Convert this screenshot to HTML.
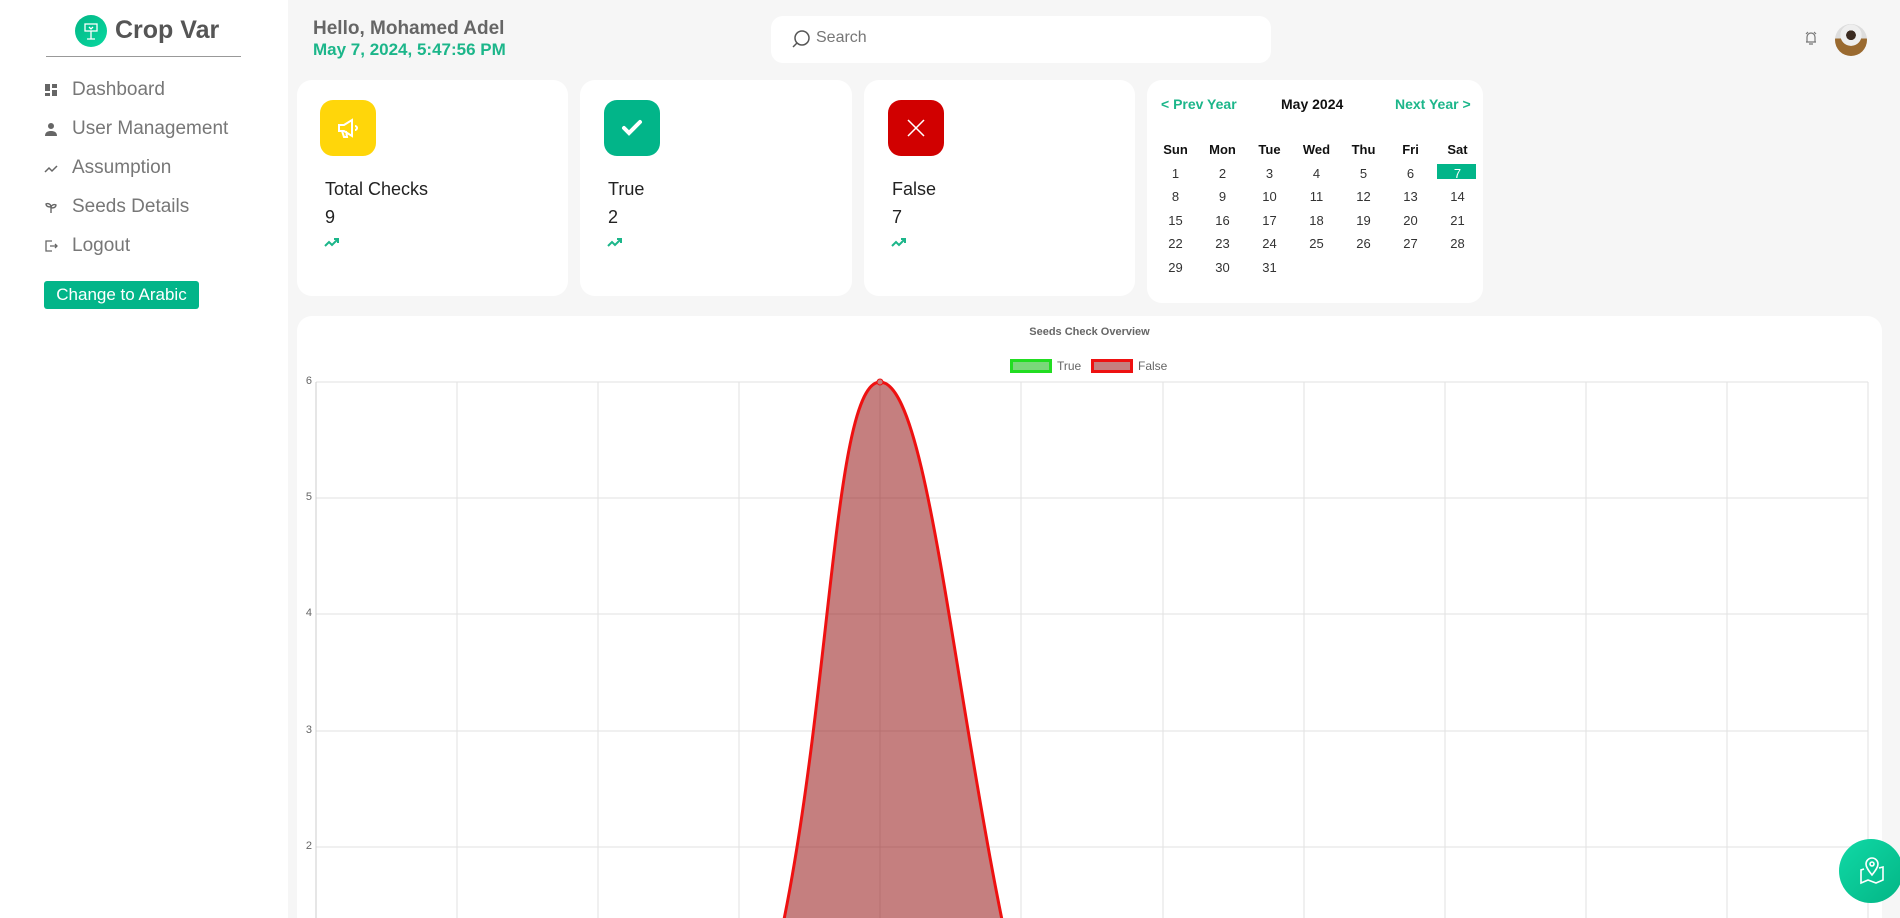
<!DOCTYPE html>
<html style="overflow:hidden;height:918px"><head><meta charset="utf-8"><style>
*{box-sizing:border-box;margin:0;padding:0}
body{width:1900px;height:918px;overflow:hidden;background:#f6f6f6;font-family:"Liberation Sans",sans-serif;position:relative}
.a{position:absolute}
.side{left:0;top:0;width:288px;height:918px;background:#fff}
.menu{left:44px;font-size:19px;color:#777;display:flex;align-items:center}
.menu svg{width:14px;height:14px;margin-right:14px}
.card{background:#fff;border-radius:15px}
.ib{width:56px;height:56px;border-radius:13px;display:flex;align-items:center;justify-content:center}
.ct{font-size:18px;color:#222}
.cal{font-size:13px;color:#333;text-align:center;width:47px}
.yl{font-size:11px;color:#666;width:14px;text-align:right}
</style></head><body>
<div class="a side"></div>
<div class="a" style="left:75px;top:15px;width:32px;height:32px;border-radius:50%;background:linear-gradient(135deg,#03b585,#08d9a0)">
<svg width="32" height="32" viewBox="0 0 32 32" fill="none" stroke="#fff" stroke-width="1.3"><rect x="10" y="9" width="12" height="7"/><path d="M16 16v8M12 24h8M14 12l2 2 2-2"/></svg></div>
<div class="a" style="left:115px;top:16px;font-size:25px;font-weight:bold;color:#555">Crop Var</div>
<div class="a" style="left:46px;top:56px;width:195px;height:1px;background:#999"></div>

<div class="a menu" style="top:79px"><svg viewBox="0 0 14 14" fill="#666"><rect x="1" y="1" width="5" height="7"/><rect x="8" y="1" width="5" height="4"/><rect x="1" y="10" width="5" height="3"/><rect x="8" y="7" width="5" height="6"/></svg>Dashboard</div>
<div class="a menu" style="top:118px"><svg viewBox="0 0 14 14" fill="#666"><circle cx="7" cy="4" r="3"/><path d="M1 14c0-4 3-5 6-5s6 1 6 5z"/></svg>User Management</div>
<div class="a menu" style="top:157px"><svg viewBox="0 0 14 14" fill="none" stroke="#666" stroke-width="1.5"><path d="M1 11l4-4 3 3 5-5"/></svg>Assumption</div>
<div class="a menu" style="top:196px"><svg viewBox="0 0 14 14" fill="none" stroke="#666" stroke-width="1.4"><path d="M7 13V7M7 7C7 4 4 3 2 4c0 2 2 3 5 3zM7 8c0-3 3-4 5-3 0 2-2 3-5 3z"/></svg>Seeds Details</div>
<div class="a menu" style="top:235px"><svg viewBox="0 0 14 14" fill="none" stroke="#666" stroke-width="1.3"><path d="M8 2H2v10h6M6 7h7M11 5l2 2-2 2"/></svg>Logout</div>
<div class="a" style="left:44px;top:281px;width:155px;height:28px;background:#02b589;border-radius:3px;color:#fff;font-size:17px;text-align:center;line-height:28px">Change to Arabic</div>

<div class="a" style="left:313px;top:18px;font-size:19px;font-weight:bold;color:#666">Hello, Mohamed Adel</div>
<div class="a" style="left:313px;top:40px;font-size:17px;font-weight:bold;color:#1cb68a">May 7, 2024, 5:47:56 PM</div>
<div class="a" style="left:771px;top:16px;width:500px;height:47px;background:#fff;border-radius:12px"></div>
<svg class="a" style="left:791px;top:29px" width="20" height="20" viewBox="0 0 20 20" fill="none" stroke="#555" stroke-width="1.5"><circle cx="11" cy="9" r="7"/><path d="M6 14l-4 4"/></svg>
<div class="a" style="left:816px;top:29px;font-size:16px;color:#777">Search</div>
<svg class="a" style="left:1803px;top:30px" width="16" height="16" viewBox="0 0 16 16" fill="none" stroke="#777" stroke-width="1.2"><path d="M4 12V7a4 4 0 018 0v5H3h10M6 14h4M3 4l2-2M13 4l-2-2"/></svg>
<div class="a" style="left:1835px;top:24px;width:32px;height:32px;border-radius:50%;background:radial-gradient(circle at 50% 35%,#3a2a20 0 18%,#eee 19% 40%,transparent 41%),linear-gradient(#ddd 45%,#9a6a30 46%)"></div>

<div class="a card" style="left:297px;top:80px;width:271px;height:216px"></div>
<div class="a card" style="left:580px;top:80px;width:272px;height:216px"></div>
<div class="a card" style="left:864px;top:80px;width:271px;height:216px"></div>
<div class="a ib" style="left:320px;top:100px;background:#ffd60a"><svg width="26" height="26" viewBox="0 0 26 26" fill="none" stroke="#fff" stroke-width="2"><path d="M4 10h5l8-5v16l-8-5H4zM7 16l2 6h3l-1-6M20 11a2 2 0 010 4"/></svg></div>
<div class="a ib" style="left:604px;top:100px;background:#02b589"><svg width="26" height="26" viewBox="0 0 26 26" fill="none" stroke="#fff" stroke-width="4" stroke-linecap="round"><path d="M5 13l5 5 11-11"/></svg></div>
<div class="a ib" style="left:888px;top:100px;background:#d10000"><svg width="26" height="26" viewBox="0 0 26 26" stroke="#fff" stroke-width="1.5"><path d="M5 5l16 16M21 5L5 21"/></svg></div>
<div class="a ct" style="left:325px;top:179px">Total Checks</div><div class="a ct" style="left:325px;top:207px">9</div>
<div class="a ct" style="left:608px;top:179px">True</div><div class="a ct" style="left:608px;top:207px">2</div>
<div class="a ct" style="left:892px;top:179px">False</div><div class="a ct" style="left:892px;top:207px">7</div>
<svg class="a" style="left:324px;top:236px" width="16" height="12" viewBox="0 0 16 12" fill="none" stroke="#1cb68a" stroke-width="2"><path d="M1 10l4-4 3 3 6-6M10 3h4v4"/></svg>
<svg class="a" style="left:607px;top:236px" width="16" height="12" viewBox="0 0 16 12" fill="none" stroke="#1cb68a" stroke-width="2"><path d="M1 10l4-4 3 3 6-6M10 3h4v4"/></svg>
<svg class="a" style="left:891px;top:236px" width="16" height="12" viewBox="0 0 16 12" fill="none" stroke="#1cb68a" stroke-width="2"><path d="M1 10l4-4 3 3 6-6M10 3h4v4"/></svg>

<div class="a card" style="left:1147px;top:80px;width:336px;height:223px"></div>
<div class="a" style="left:1161px;top:96px;font-size:14px;font-weight:bold;color:#1cb68a">&lt; Prev Year</div>
<div class="a" style="left:1281px;top:96px;font-size:14px;font-weight:bold;color:#111">May 2024</div>
<div class="a" style="left:1395px;top:96px;font-size:14px;font-weight:bold;color:#1cb68a">Next Year &gt;</div>
<div class="a" style="left:1437px;top:164px;width:39px;height:15px;background:#02b589"></div>
<div class="a" style="left:1152px;top:138px;line-height:23.5px">
<div style="display:flex;font-weight:bold"><div class="cal" style="color:#111">Sun</div><div class="cal" style="color:#111">Mon</div><div class="cal" style="color:#111">Tue</div><div class="cal" style="color:#111">Wed</div><div class="cal" style="color:#111">Thu</div><div class="cal" style="color:#111">Fri</div><div class="cal" style="color:#111">Sat</div></div>
<div style="display:flex"><div class="cal">1</div><div class="cal">2</div><div class="cal">3</div><div class="cal">4</div><div class="cal">5</div><div class="cal">6</div><div class="cal" style="color:#fff">7</div></div>
<div style="display:flex"><div class="cal">8</div><div class="cal">9</div><div class="cal">10</div><div class="cal">11</div><div class="cal">12</div><div class="cal">13</div><div class="cal">14</div></div>
<div style="display:flex"><div class="cal">15</div><div class="cal">16</div><div class="cal">17</div><div class="cal">18</div><div class="cal">19</div><div class="cal">20</div><div class="cal">21</div></div>
<div style="display:flex"><div class="cal">22</div><div class="cal">23</div><div class="cal">24</div><div class="cal">25</div><div class="cal">26</div><div class="cal">27</div><div class="cal">28</div></div>
<div style="display:flex"><div class="cal">29</div><div class="cal">30</div><div class="cal">31</div></div>
</div>

<div class="a card" style="left:297px;top:316px;width:1585px;height:602px;border-radius:15px 15px 0 0"></div>
<div class="a" style="left:297px;width:1585px;top:326px;text-align:center;font-size:11px;font-weight:bold;color:#666">Seeds Check Overview</div>
<div class="a" style="left:1010px;top:359px;width:42px;height:14px;border:3px solid #22dd22;background:#7ad87a"></div>
<div class="a" style="left:1057px;top:359px;font-size:12px;color:#666">True</div>
<div class="a" style="left:1091px;top:359px;width:42px;height:14px;border:3px solid #ee1111;background:#c57f7f"></div>
<div class="a" style="left:1138px;top:359px;font-size:12px;color:#666">False</div>
<div class="a yl" style="left:298px;top:375px">6</div>
<div class="a yl" style="left:298px;top:491px">5</div>
<div class="a yl" style="left:298px;top:607px">4</div>
<div class="a yl" style="left:298px;top:724px">3</div>
<div class="a yl" style="left:298px;top:840px">2</div>
<svg class="a" style="left:0;top:0;overflow:hidden" width="1900" height="918">
<g stroke="#e2e2e2" stroke-width="1">
<path d="M316 382H1868M316 498H1868M316 614H1868M316 731H1868M316 847H1868"/>
<path d="M457 382V918M598 382V918M739 382V918M880 382V918M1021 382V918M1163 382V918M1304 382V918M1445 382V918M1586 382V918M1727 382V918M1868 382V918"/>
<path d="M316 382V918" stroke="#ccc"/>
</g>
<path d="M739 1080C833 847 823.6 382 880 382C936 382 960 800 1040 1080Z" fill="rgba(139,0,0,0.5)" stroke="#ee1111" stroke-width="3"/>
<circle cx="880" cy="382" r="3" fill="#c57f7f" stroke="#ee1111"/>
</svg>
<div class="a" style="left:1839px;top:839px;width:61px;height:64px;overflow:hidden"><div style="width:64px;height:64px;border-radius:50%;background:linear-gradient(135deg,#10d9a6,#03b585)"></div></div>
<svg class="a" style="left:1858px;top:855px" width="28" height="30" viewBox="0 0 28 30" fill="none" stroke="#fff" stroke-width="1.6"><path d="M14 20c-4-5-6-8-6-11a6 6 0 0112 0c0 3-2 6-6 11z"/><circle cx="14" cy="9" r="2"/><path d="M6 14l-3 1v13l7-3 8 3 7-3V12l-4 1"/></svg>
</body></html>
